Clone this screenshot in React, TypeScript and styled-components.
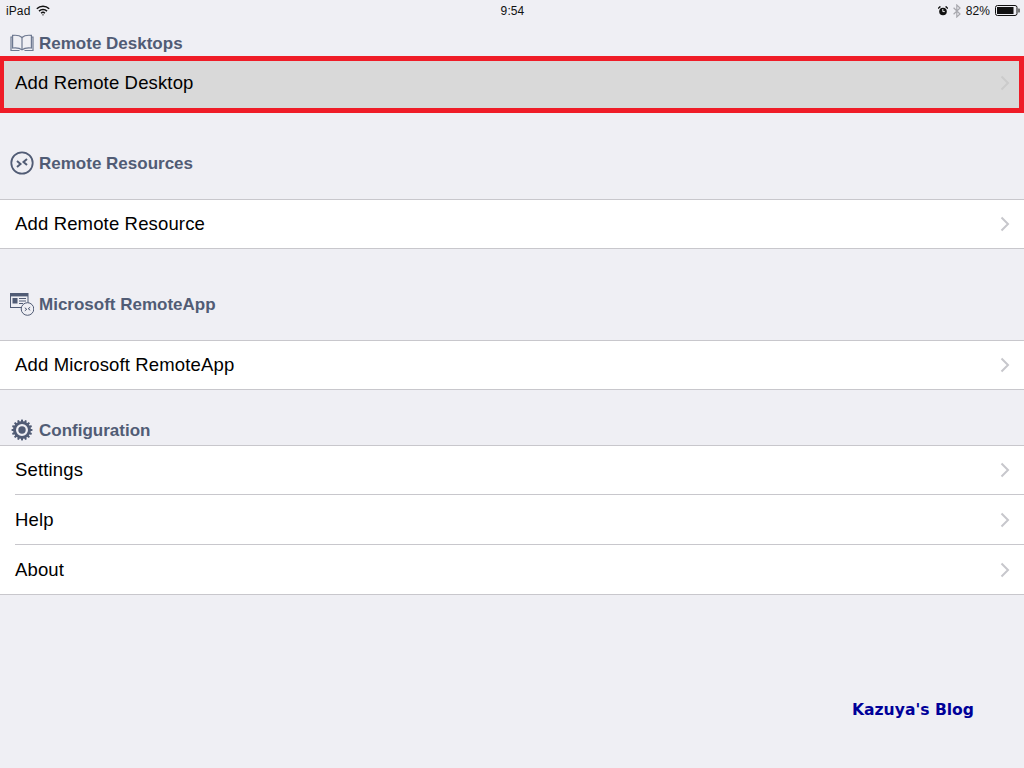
import styled, { createGlobalStyle } from "styled-components";

const GlobalStyle = createGlobalStyle`
  html, body {
    margin: 0;
    padding: 0;
    background: #efeff4;
  }
`;

const Page = styled.div`
  display: flex;
  flex-direction: column;
  width: 1024px;
  height: 768px;
  overflow: hidden;
  background: #efeff4;
  font-family: "Liberation Sans", Arial, sans-serif;
`;

const StatusBar = styled.div`
  display: grid;
  grid-template-columns: 1fr auto 1fr;
  align-items: center;
  box-sizing: border-box;
  height: 20px;
  padding: 1px 4px 0 6px;
  font-size: 12px;
  letter-spacing: 0.1px;
  color: #111;
`;

const StatusLeft = styled.div`
  display: flex;
  align-items: center;
  gap: 6px;
`;

const StatusRight = styled.div`
  display: flex;
  align-items: center;
  justify-content: flex-end;
  gap: 5px;
`;

const Clock = styled.span`
  margin-right: 1px;
`;

const SectionHeader = styled.div<{ $height: number; $bottom: number }>`
  display: flex;
  align-items: flex-end;
  gap: 5px;
  height: ${(p) => p.$height}px;
  padding: 0 0 ${(p) => p.$bottom}px 10px;
  box-sizing: border-box;
  color: #515c75;
  font-size: 17px;
  line-height: 20px;
  font-weight: bold;
`;

const HeaderIcon = styled.span`
  display: flex;
  width: 24px;
  height: 24px;
  margin-bottom: -1px;
  align-items: center;
  justify-content: center;
`;

const List = styled.div`
  background: #fff;
  border-top: 1px solid #c8c7cc;
  border-bottom: 1px solid #c8c7cc;
`;

const rowText = `
  font-size: 18.5px;
  letter-spacing: 0.15px;
  color: #000;
`;

const Row = styled.div`
  display: flex;
  align-items: center;
  justify-content: space-between;
  height: 48px;
  padding: 0 14px 0 15px;
  background: #fff;
  ${rowText}
`;

const SelectedRow = styled.div`
  display: flex;
  align-items: center;
  justify-content: space-between;
  box-sizing: border-box;
  height: 57px;
  padding: 0 9px 3px 11px;
  background: #d9d9d9;
  border: 5px solid #ef1c27;
  border-left-width: 4px;
  ${rowText}
`;

const DividedRow = styled.div`
  background: #fff;
  padding-left: 15px;
  & + & > div {
    height: 49px;
    border-top: 1px solid #c8c7cc;
  }
`;

const InsetRow = styled.div`
  display: flex;
  align-items: center;
  justify-content: space-between;
  height: 48px;
  padding-right: 14px;
  ${rowText}
`;

const Watermark = styled.div`
  align-self: flex-end;
  margin: auto 50px 48px 0;
  color: #000099;
  font-family: "DejaVu Sans", Verdana, sans-serif;
  font-size: 15.6px;
  line-height: 20px;
  font-weight: bold;
`;

const Chevron = ({ faint }: { faint?: boolean }) => (
  <svg width="10" height="16" viewBox="0 0 10 16" fill="none">
    <path d="M1.500 1.500 8 8l-6.500 6.500" stroke={faint ? "#cbcbcb" : "#c7c7cc"} strokeWidth="2" />
  </svg>
);

const Wifi = () => (
  <svg width="14" height="11" viewBox="0 0 14 11" fill="none" stroke="#111" strokeWidth="1.500">
    <path d="M.8 3.800a9 9 0 0 1 12.400 0" />
    <path d="M3 6.100a5.800 5.800 0 0 1 8 0" />
    <path d="M5.100 8.200a2.800 2.800 0 0 1 3.800 0" />
    <path d="M7 10.800 5.900 9.500h2.200z" fill="#111" stroke="none" />
  </svg>
);

const Alarm = () => (
  <svg width="10" height="10" viewBox="0 0 10 10">
    <circle cx="5" cy="5.500" r="3.800" fill="#111" />
    <path d="M4.800 3v2.600h2" stroke="#fff" strokeWidth="0.9" fill="none" />
    <path d="M0 2.600 2.400 .4M10 2.600 7.600 .4" stroke="#111" strokeWidth="1.400" />
  </svg>
);

const Bluetooth = () => (
  <svg width="8" height="14" viewBox="0 0 8 14" fill="none" stroke="#a8a8ae" strokeWidth="1.200">
    <path d="M.6 3.800 7 10 3.800 13V1L7 4 .6 10.200" />
  </svg>
);

const Battery = () => (
  <svg width="25" height="11" viewBox="0 0 25 11">
    <rect x=".5" y=".5" width="21.500" height="10" rx="2" fill="none" stroke="#111" />
    <rect x="2" y="2" width="16.500" height="7" fill="#111" />
    <path d="M23 3.500h1a1 1 0 0 1 0 4h-1z" fill="#777" />
  </svg>
);

const BookIcon = () => (
  <svg width="24" height="18" viewBox="0 0 24 18" fill="none" stroke="#6d7890" strokeWidth="1.200">
    <path d="M12 3.500C10 1.600 6 1 2.600 1.400V14c3.400-.4 7.200 0 9.400 1.800 2.200-1.800 6-2.200 9.400-1.800V1.400C18 1 14 1.600 12 3.500z" />
    <path d="M12 3.500v12.300" />
    <path d="M2.600 3H1v13.500h8.500M21.400 3H23v13.500h-8.500" />
  </svg>
);

const RemoteIcon = () => (
  <svg width="24" height="24" viewBox="0 0 24 24" fill="none" stroke="#515c75">
    <circle cx="12" cy="12" r="10.700" strokeWidth="1.800" />
    <path d="M7 10 10.500 13 7 16M17 8 13.500 11 17 14" strokeWidth="2" />
  </svg>
);

const AppIcon = () => (
  <svg width="24" height="24" viewBox="0 0 24 24" fill="none" stroke="#515c75">
    <rect x=".5" y="1.500" width="17.500" height="14" fill="#efeff4" strokeWidth="1" />
    <path d="M.5 3.200H18" strokeWidth="2.400" />
    <rect x="2.500" y="6" width="5" height="5.500" fill="#515c75" stroke="none" />
    <path d="M9 6.500h7M9 9h7M9 11.500h4" strokeWidth="1" />
    <circle cx="17.500" cy="17" r="6.300" fill="#efeff4" strokeWidth="1" />
    <path d="M14.800 15.800 16.800 17.300l-2 1.500M20.200 15.200 18.200 16.700l2 1.500" strokeWidth="1" />
  </svg>
);

const GearIcon = () => {
  const teeth = Array.from({ length: 16 }, (_, i) => i * 22.5);
  return (
    <svg width="22" height="22" viewBox="0 0 22 22" fill="none">
      {teeth.map((a) => (
        <rect key={a} x="10" y="0.600" width="2" height="3" fill="#515c75" transform={`rotate(${a} 11 11)`} />
      ))}
      <circle cx="11" cy="11" r="7.500" stroke="#515c75" strokeWidth="3" />
      <circle cx="11" cy="11" r="3.700" fill="#515c75" />
    </svg>
  );
};

const App = () => (
  <Page>
    <GlobalStyle />
    <StatusBar>
      <StatusLeft>
        iPad
        <Wifi />
      </StatusLeft>
      <Clock>9:54</Clock>
      <StatusRight>
        <Alarm />
        <Bluetooth />
        <span>82%</span>
        <Battery />
      </StatusRight>
    </StatusBar>

    <SectionHeader $height={36} $bottom={2}>
      <HeaderIcon>
        <BookIcon />
      </HeaderIcon>
      Remote Desktops
    </SectionHeader>
    <SelectedRow>
      Add Remote Desktop
      <Chevron faint />
    </SelectedRow>

    <SectionHeader $height={86} $bottom={25}>
      <HeaderIcon>
        <RemoteIcon />
      </HeaderIcon>
      Remote Resources
    </SectionHeader>
    <List>
      <Row>
        Add Remote Resource
        <Chevron />
      </Row>
    </List>

    <SectionHeader $height={91} $bottom={25}>
      <HeaderIcon>
        <AppIcon />
      </HeaderIcon>
      Microsoft RemoteApp
    </SectionHeader>
    <List>
      <Row>
        Add Microsoft RemoteApp
        <Chevron />
      </Row>
    </List>

    <SectionHeader $height={55} $bottom={4}>
      <HeaderIcon>
        <GearIcon />
      </HeaderIcon>
      Configuration
    </SectionHeader>
    <List>
      <DividedRow>
        <InsetRow>
          Settings
          <Chevron />
        </InsetRow>
      </DividedRow>
      <DividedRow>
        <InsetRow>
          Help
          <Chevron />
        </InsetRow>
      </DividedRow>
      <DividedRow>
        <InsetRow>
          About
          <Chevron />
        </InsetRow>
      </DividedRow>
    </List>

    <Watermark>Kazuya's Blog</Watermark>
  </Page>
);

export default App;
